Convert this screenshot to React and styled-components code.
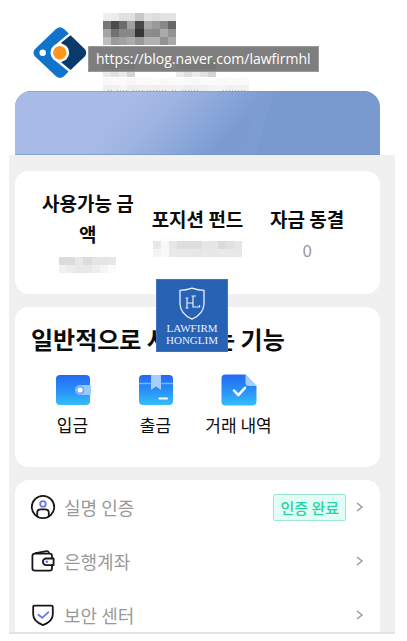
import React from "react";
import styled, { createGlobalStyle } from "styled-components";

const GlobalStyle = createGlobalStyle`
  * { box-sizing: border-box; }
  body {
    margin: 0;
    background: #fff;
    color: #0c0c0c;
    font-family: "Noto Sans CJK KR", "Noto Sans", sans-serif;
  }
`;

const Page = styled.div`
  position: relative;
  padding: 0 12px 8px 9px;
`;

const Header = styled.header`
  position: relative;
  display: flex;
  gap: 16px;
  padding: 13px 0 0 22px;
`;

const LogoArt = styled.svg`
  flex: none;
  width: 56px;
  height: 56px;
  margin-top: 12px;
`;

const ProfileMasks = styled.div`
  display: flex;
  flex-direction: column;
`;

const MaskArt = styled.svg`
  display: block;
  flex: none;
`;

const Address = styled.a`
  position: absolute;
  left: 79px;
  top: 46px;
  padding: 0 7px;
  border: 1px solid #999;
  background: rgba(112, 112, 112, 0.9);
  color: #fff;
  font: 14px/24px "Open Sans", "Noto Sans", sans-serif;
  text-decoration: none;
  white-space: nowrap;
`;

const Banner = styled.div`
  height: 64px;
  margin: 0 15px 0 6px;
  overflow: hidden;
  border-radius: 16px 16px 0 0;
  background: #799acf;
`;

const BannerArt = styled.svg`
  display: block;
  width: 100%;
  height: 100%;
`;

const Panel = styled.main`
  display: flex;
  flex-direction: column;
  gap: 13px;
  padding: 16px 15px 0 6px;
  overflow: hidden;
  background: #f0f0f0;
  border-bottom: 2px solid #e2e2e2;
`;

const Card = styled.section`
  border-radius: 14px;
  background: #fff;
`;

const Stats = styled(Card)`
  display: grid;
  grid-template-columns: repeat(3, 1fr);
  align-items: center;
  padding: 16px 18px 14px;
`;

const Stat = styled.div`
  display: flex;
  flex-direction: column;
  align-items: center;
  padding: 0 8px;
  line-height: 31px;
  text-align: center;
`;

const StatLabel = styled.div`
  font-size: 19px;
  font-weight: 700;
`;

const StatValue = styled.div`
  display: flex;
  align-items: center;
  height: 31px;
  color: #999;
  font-size: 17px;
`;

const Features = styled(Card)`
  padding: 14px 16px 28px;
`;

const Title = styled.h2`
  margin: 0;
  font-size: 24px;
  line-height: 36px;
  white-space: nowrap;
`;

const FeatureRow = styled.div`
  display: flex;
  padding-top: 17px;
`;

const Feature = styled.button`
  display: flex;
  flex-direction: column;
  align-items: center;
  gap: 5px;
  width: 83px;
  padding: 0;
  border: 0;
  background: none;
  color: inherit;
  font: 17px/28px "Noto Sans CJK KR", sans-serif;
  cursor: pointer;
`;

const FeatureArt = styled.svg`
  width: 36px;
  height: 32px;
`;

const Menu = styled(Card)`
  margin-bottom: -10px;
`;

const MenuItem = styled.button`
  display: flex;
  align-items: center;
  width: 100%;
  height: 54px;
  padding: 0 16px 0 15px;
  border: 0;
  background: none;
  color: #999;
  font: 18px/28px "Noto Sans CJK KR", sans-serif;
  text-align: left;
  cursor: pointer;
`;

const MenuArt = styled.svg`
  flex: none;
  width: 26px;
  height: 26px;
  margin-right: 8px;
  fill: none;
  stroke: #171717;
  stroke-width: 1.8;
  stroke-linejoin: round;
  stroke-linecap: round;
`;

const MenuLabel = styled.span`
  flex: 1;
`;

const Badge = styled.span`
  margin-right: 9px;
  padding: 0 6px;
  border: 1px solid #9be8d0;
  border-radius: 2px;
  background: #e3fcf5;
  color: #26d3a2;
  font-size: 15px;
  font-weight: 500;
  line-height: 25px;
`;

const ChevronArt = styled.svg`
  width: 9px;
  height: 12px;
  fill: none;
  stroke: #999;
  stroke-width: 1.4;
`;

const FirmMark = styled.div`
  position: absolute;
  left: 156px;
  top: 279px;
  display: flex;
  flex-direction: column;
  align-items: center;
  width: 72px;
  height: 73px;
  padding-top: 7px;
  border: 1px solid #3f74c0;
  background: #2862b5;
  color: #e8eefa;
  font: 11px/12px "Liberation Serif", serif;
`;

const FirmArt = styled.svg`
  width: 28px;
  height: 34px;
  margin-bottom: 1px;
`;

const nameMask = [
  [238, 236, 224, 224, 200, 226, 221, 227, 227],
  [119, 76, 108, 160, 72, 166, 154, 137, 102],
  [164, 114, 135, 135, 53, 140, 138, 170, 147],
  [190, 155, 162, 172, 154, 178, 178, 146, 169],
];
const detailMask = [
  [190, 180, 200, 170, 255, 255, 255, 255, 255, 210, 190, 200, 180, 170],
  [235, 225, 235, 212, 255, 255, 255, 255, 255, 235, 222, 235, 225, 212],
];
const footMask = [
  [248, 250, 250, 247, 250, 250, 251, 248, 250, 251, 250, 248, 250, 251, 249, 250, 248, 250],
  [239, 241, 245, 238, 239, 241, 238, 240, 240, 242, 238, 240, 239, 244, 245, 239, 242, 241],
];
const balanceMask = [
  [220, 220, 232, 220, 229, 229, 231],
  [241, 236, 232, 232, 238, 245, 252],
];
const fundMask = [
  [232, 248, 231, 222, 222, 222, 230, 230, 218, 224, 230],
  [244, 249, 233, 232, 232, 230, 232, 232, 233, 232, 232],
];

function Mosaic({ cells, width, height, children }) {
  const w = width / cells[0].length;
  const h = height / cells.length;
  return (
    <MaskArt width={width} height={height} shapeRendering="crispEdges" aria-hidden="true">
      {cells.map((row, y) =>
        row.map((v, x) => (
          <rect key={`${y}-${x}`} x={x * w} y={y * h} width={w} height={h} fill={`rgb(${v},${v},${v})`} />
        ))
      )}
      {children}
    </MaskArt>
  );
}

const DetailRow = styled.div`
  padding-top: 16px;
`;

const FootRow = styled.div`
  padding-top: 1px;
`;

function Logo() {
  return (
    <LogoArt viewBox="0 0 56 56" aria-label="logo">
      <path d="M25 4 Q29 .6 33 4 L37.8 8.600 L24 20 V35.600 L37.600 46.400 L33 51.200 Q29 54.800 25 51.200 L3.800 31.200 Q1.200 27.700 3.800 24.200 Z" fill="#1273cb" />
      <path d="M39.600 10.200 L54 24.200 Q56.400 27.700 54 31.200 L39.600 45 L30.400 37.400 L34 28 L30.400 17.600 Z" fill="#0a3a6c" />
      <circle cx="28.800" cy="27.700" r="9.300" fill="#fff" />
      <circle cx="28.800" cy="27.700" r="6.700" fill="#ff951f" />
      <circle cx="11.700" cy="27.700" r="3.200" fill="#fff" />
    </LogoArt>
  );
}

function BannerFill() {
  return (
    <BannerArt viewBox="0 0 365 64" preserveAspectRatio="none" aria-hidden="true">
      <defs>
        <linearGradient id="sky" gradientUnits="userSpaceOnUse" x1="125" y1="0" x2="195" y2="64">
          <stop offset="0" stopColor="#a7bbe6" />
          <stop offset=".35" stopColor="#9db3e1" />
          <stop offset=".75" stopColor="#87a5d8" />
          <stop offset="1" stopColor="#7c9cd0" />
        </linearGradient>
      </defs>
      <path d="M0 0H243L230 64H0Z" fill="url(#sky)" />
      <path d="M243 0H259L241 64H230Z" fill="#7d9dd2" />
      <path d="M0 .5H365" stroke="#7193c7" strokeOpacity=".5" />
      <path d="M0 63.5H365" stroke="#7292c8" strokeOpacity=".6" />
    </BannerArt>
  );
}

function Gradient({ id }) {
  return (
    <linearGradient id={id} x1="0" y1="0" x2="0" y2="1">
      <stop offset="0" stopColor="#2469f5" />
      <stop offset=".5" stopColor="#288ff7" />
      <stop offset="1" stopColor="#35bdf9" />
    </linearGradient>
  );
}

function DepositIcon() {
  return (
    <FeatureArt viewBox="0 0 36 32" aria-hidden="true">
      <defs><Gradient id="deposit" /></defs>
      <rect x="1" y="1" width="34" height="30" rx="4" fill="url(#deposit)" />
      <path d="M25 11H36V21H25A5 5 0 0 1 25 11Z" fill="#9bcaff" />
      <circle cx="25" cy="16" r="4.6" fill="#79adfb" />
      <circle cx="25" cy="16" r="2.5" fill="#fff" />
    </FeatureArt>
  );
}

function WithdrawIcon() {
  return (
    <FeatureArt viewBox="0 0 36 32" aria-hidden="true">
      <defs><Gradient id="withdraw" /></defs>
      <rect x="1" y="1" width="34" height="30" rx="4" fill="url(#withdraw)" />
      <path d="M1 9.5H35" stroke="#75b5ff" strokeWidth="1.3" />
      <path d="M13 1H23V16L18 12.5L13 16Z" fill="#a4ceff" />
      <path d="M21.5 24.5H29" stroke="#fff" strokeWidth="2.2" strokeLinecap="round" />
    </FeatureArt>
  );
}

function HistoryIcon() {
  return (
    <FeatureArt viewBox="0 0 36 32" aria-hidden="true">
      <defs><Gradient id="history" /></defs>
      <path d="M4.5 .5H24.5L35.5 12V27.5Q35.5 31.5 31.5 31.5H4.5Q.5 31.5 .5 27.5V4.5Q.5 .5 4.5 .5Z" fill="url(#history)" />
      <path d="M24.5 .5L35.5 12H28Q24.5 12 24.5 8.5Z" fill="#a4cdff" />
      <path d="M13 16.5L17.3 21.2L24 13.8" fill="none" stroke="#fff" strokeWidth="2.5" strokeLinecap="round" strokeLinejoin="round" />
    </FeatureArt>
  );
}

function PersonIcon() {
  return (
    <MenuArt viewBox="0 0 26 26" aria-hidden="true">
      <circle cx="13" cy="13" r="11.2" />
      <circle cx="13" cy="9.9" r="2.8" stroke="#6d74ec" />
      <path d="M7.2 22.2V18.8Q7.2 15.4 10.6 15.4H15.4Q18.8 15.4 18.8 18.8V22.2" />
    </MenuArt>
  );
}

function WalletIcon() {
  return (
    <MenuArt viewBox="0 0 26 26" aria-hidden="true">
      <path d="M22 10V7.8Q22 5.6 19.8 5.6H4.8Q2.4 5.6 2.4 8V20.2Q2.4 22.6 4.8 22.6H19.6Q22 22.6 22 20.2V17" />
      <path d="M5.5 5.2L16.8 3.2Q18.6 3 19 5.2" />
      <path d="M23.6 10.5H16.2A3.3 3.3 0 0 0 16.2 17.1H23.6Z" />
      <circle cx="16.8" cy="13.8" r=".7" stroke="#6d74ec" strokeWidth="1.2" />
    </MenuArt>
  );
}

function ShieldIcon() {
  return (
    <MenuArt viewBox="0 0 26 26" aria-hidden="true">
      <path d="M4.5 3.6H21.5Q22.8 3.6 22.8 5V12.6Q22.8 19.4 13 23.2Q3.2 19.4 3.2 12.6V5Q3.2 3.6 4.5 3.6Z" />
      <path d="M8.4 12.8L12.2 15.8L18.4 10.2" stroke="#6d74ec" />
    </MenuArt>
  );
}

function Chevron() {
  return (
    <ChevronArt viewBox="0 0 9 12" aria-hidden="true">
      <path d="M2 2L7 6L2 10" />
    </ChevronArt>
  );
}

const features = [
  { label: "입금", Icon: DepositIcon },
  { label: "출금", Icon: WithdrawIcon },
  { label: "거래 내역", Icon: HistoryIcon },
];

const menu = [
  { label: "실명 인증", Icon: PersonIcon, badge: "인증 완료" },
  { label: "은행계좌", Icon: WalletIcon },
  { label: "보안 센터", Icon: ShieldIcon },
];

export default function App() {
  return (
    <>
      <GlobalStyle />
      <Page>
        <Header>
          <Logo />
          <ProfileMasks>
            <Mosaic cells={nameMask} width={73} height={32} />
            <DetailRow><Mosaic cells={detailMask} width={113} height={16} /></DetailRow>
            <FootRow>
              <Mosaic cells={footMask} width={146} height={13}>
                <path d="M5 12.5H11M14 12.5H25M30 12.5H41M44 12.5H65M69 12.5H73M79 12.5H97M120 12.5H142" stroke="#b5b9c2" strokeDasharray="1 2" />
              </Mosaic>
            </FootRow>
          </ProfileMasks>
          <Address href="https://blog.naver.com/lawfirmhl">https://blog.naver.com/lawfirmhl</Address>
        </Header>
        <Banner><BannerFill /></Banner>
        <Panel>
          <Stats>
            <Stat>
              <StatLabel>사용가능 금액</StatLabel>
              <StatValue><Mosaic cells={balanceMask} width={57} height={16} /></StatValue>
            </Stat>
            <Stat>
              <StatLabel>포지션 펀드</StatLabel>
              <StatValue><Mosaic cells={fundMask} width={89} height={16} /></StatValue>
            </Stat>
            <Stat>
              <StatLabel>자금 동결</StatLabel>
              <StatValue>0</StatValue>
            </Stat>
          </Stats>
          <Features>
            <Title>일반적으로 사용하는 기능</Title>
            <FeatureRow>
              {features.map(({ label, Icon }) => (
                <Feature key={label} type="button"><Icon />{label}</Feature>
              ))}
            </FeatureRow>
          </Features>
          <Menu>
            {menu.map(({ label, Icon, badge }) => (
              <MenuItem key={label} type="button">
                <Icon />
                <MenuLabel>{label}</MenuLabel>
                {badge && <Badge>{badge}</Badge>}
                <Chevron />
              </MenuItem>
            ))}
          </Menu>
        </Panel>
        <FirmMark>
          <FirmArt viewBox="0 0 28 34" fill="none" stroke="#e8eefa" aria-hidden="true">
            <path d="M14 1.2Q20 3.4 26 3.4V17Q25.5 27 14 32.2Q2.5 27 2 17V3.4Q8 3.4 14 1.2Z" strokeWidth="1.3" />
            <path d="M9 11V21M15 9V19M9 16H15M7.5 11H10.5M7.5 21H10.5M13.5 9H18M15 19V20H21.5V18" strokeWidth="1.2" />
          </FirmArt>
          <span>LAWFIRM</span>
          <span>HONGLIM</span>
        </FirmMark>
      </Page>
    </>
  );
}
